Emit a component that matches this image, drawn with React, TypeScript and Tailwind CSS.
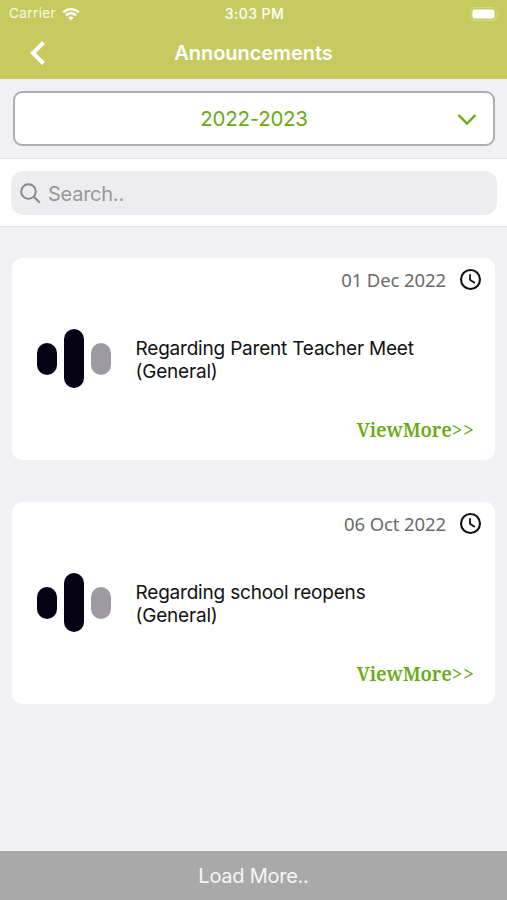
import { useState } from "react";

interface Announcement {
  id: number;
  date: string;
  title: string;
  category: string;
}

const announcements: Announcement[] = [
  { id: 1, date: "01 Dec 2022", title: "Regarding Parent Teacher Meet", category: "General" },
  { id: 2, date: "06 Oct 2022", title: "Regarding school reopens", category: "General" },
];

function StatusBar() {
  return (
    <div className="grid h-[27px] grid-cols-3 items-center pl-[9px] pr-[7px] text-[13px] leading-none text-white">
      <div className="flex items-center gap-[6px]">
        <span className="pt-px text-[13.5px] tracking-[0.4px] text-white/85">Carrier</span>
        <svg width="18" height="14" viewBox="0 0 19 14" fill="none" stroke="currentColor" strokeWidth="2.5">
          <path d="M1.3 5.3a11.5 11.5 0 0 1 16.4 0" />
          <path d="M4.2 8.4a7.4 7.4 0 0 1 10.6 0" />
          <path d="M9.5 13.8 6.5 10.8a4.2 4.2 0 0 1 6 0z" fill="currentColor" stroke="none" />
        </svg>
      </div>
      <span className="text-center text-[14px] font-medium tracking-[0.45px]">3:03 PM</span>
      <svg className="justify-self-end" width="30" height="14" viewBox="0 0 30 14">
        <rect x="0.5" y="0.5" width="26" height="13" rx="4" fill="none" stroke="#fff" strokeOpacity="0.25" />
        <rect x="2.5" y="2.5" width="22" height="9" rx="2" fill="#fff" />
        <path d="M28 4.8c1.6.7 1.6 3.7 0 4.4z" fill="#fff" fillOpacity="0.35" />
      </svg>
    </div>
  );
}

function AnnouncementCard({ item }: { item: Announcement }) {
  return (
    <article className="flex h-[202px] flex-col rounded-[10px] bg-white">
      <div className="flex items-center justify-end gap-[13px] pr-[13px] pt-[9px]">
        <time className="pt-px font-['Noto_Sans',sans-serif] text-[18.5px] leading-[23px] tracking-[-0.1px] text-[#6b6b6b]">
          {item.date}
        </time>
        <svg width="23" height="23" viewBox="0 0 23 23" fill="none" stroke="#111">
          <circle cx="11.5" cy="11.5" r="9.5" strokeWidth="2.1" />
          <path d="M11 6.2v5.5l4.8 3.2" strokeWidth="1.8" />
        </svg>
      </div>

      <div className="flex flex-1 items-center pl-[25px] pt-[9px]">
        <div className="flex w-[98.5px] items-center gap-[7px]">
          <span className="h-8 w-5 rounded-full bg-[#040214]" />
          <span className="h-[59px] w-5 rounded-full bg-[#040214]" />
          <span className="h-8 w-5 rounded-full bg-[#9d9b9f]" />
        </div>
        <h2 className="pt-0.5 text-[19px] leading-[23px] tracking-[-0.2px] text-[#111]">
          {item.title}
          <br />({item.category})
        </h2>
      </div>

      <button className="mr-[20px] mb-[17px] self-end font-['Noto_Serif','Liberation_Serif',serif] text-[19px] leading-[26px] font-semibold tracking-[-0.15px] text-[#6aaa12]">
        ViewMore<span className="font-medium tracking-[1px]">&gt;&gt;</span>
      </button>
    </article>
  );
}

export default function App() {
  const [query, setQuery] = useState("");

  return (
    <div className="flex h-[900px] w-[507px] flex-col overflow-hidden bg-[#f0f0f5] font-[Inter,sans-serif]">
      <header className="h-[79px] bg-[#c7cb5f] text-white">
        <StatusBar />
        <div className="grid h-[51px] grid-cols-[60px_1fr_60px] items-center">
          <button className="pl-[29px]" aria-label="Back">
            <svg width="18" height="26" viewBox="0 0 18 26" fill="none" stroke="currentColor" strokeWidth="4">
              <path d="M14.5 2.5 4 13l10.5 10.5" />
            </svg>
          </button>
          <h1 className="text-center text-[20px] font-semibold tracking-[-0.05px]">Announcements</h1>
        </div>
      </header>

      <div className="h-[79px] pl-[13px] pr-3 pt-3">
        <button className="grid h-[55px] w-full grid-cols-[40px_1fr_40px] items-center rounded-[9px] border-2 border-[#aeaeb2] bg-white text-[#6aaa12]">
          <span className="col-start-2 pt-0.5 text-[20.5px] tracking-[-0.25px]">2022-2023</span>
          <svg className="ml-1 mt-px" width="20" height="13" viewBox="0 0 20 13" fill="none" stroke="currentColor" strokeWidth="2.4">
            <path d="m1.5 2 8.5 8.5L18.5 2" />
          </svg>
        </button>
      </div>

      <div className="h-[69px] border-y border-[#e4e4e8] bg-white pl-[11px] pr-[10px] pt-3">
        <label className="flex h-11 items-center gap-[7px] rounded-xl bg-[#ededef] pl-[9px]">
          <svg width="21" height="21" viewBox="0 0 21 21" fill="none" stroke="#88888c" strokeWidth="2">
            <circle cx="8.5" cy="8.5" r="7.3" />
            <path d="m13.8 13.8 6 6" />
          </svg>
          <input
            className="min-w-0 flex-1 bg-transparent pt-px text-[20px] tracking-[-0.25px] outline-none placeholder:text-[#98989c]"
            placeholder="Search.."
            value={query}
            onChange={(e) => setQuery(e.target.value)}
          />
        </label>
      </div>

      <main className="flex flex-1 flex-col gap-[42px] px-3 pt-[31px]">
        {announcements.map((item) => (
          <AnnouncementCard key={item.id} item={item} />
        ))}
      </main>

      <button className="h-[49px] bg-[#a9a9a9] pt-px text-[20px] tracking-[-0.25px] text-white/90">Load More..</button>
    </div>
  );
}
